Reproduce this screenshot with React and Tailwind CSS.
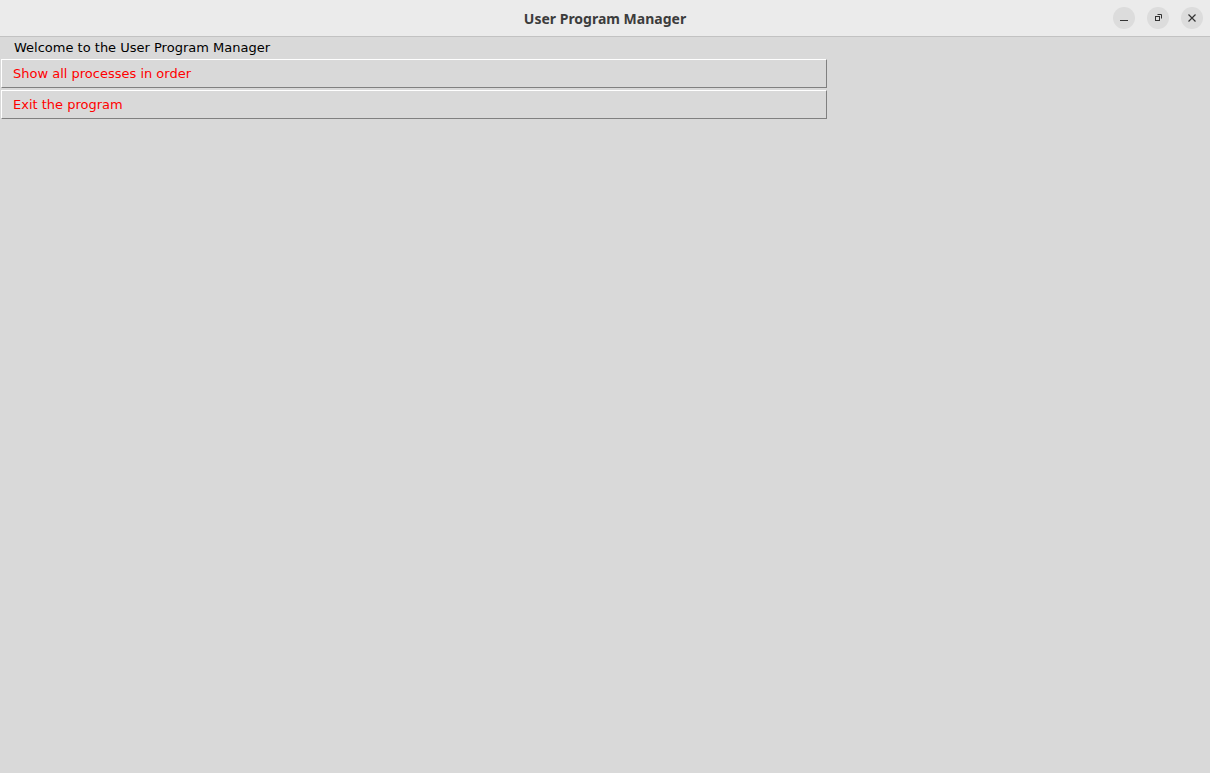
import React from "react";

function WindowButton({ children }) {
  return (
    <div className="w-[22px] h-[22px] rounded-full bg-[#dcdcdc] flex items-center justify-center">
      {children}
    </div>
  );
}

export default function App() {
  return (
    <div className="w-[1210px] h-[773px] bg-[#d9d9d9] flex flex-col overflow-hidden" style={{ fontFamily: "'DejaVu Sans', sans-serif" }}>
      {/* title bar */}
      <div className="h-[37px] shrink-0 bg-[#ebebeb] border-b border-[#c2c2c2] flex items-center relative">
        <div className="flex-1 text-center text-[14px] font-bold text-[#3c3c3c]" style={{ fontFamily: "'Noto Sans', 'DejaVu Sans', sans-serif" }}>
          User Program Manager
        </div>
        <div className="absolute right-[7px] top-[7px] flex gap-[12px]">
          <WindowButton>
            <svg width="10" height="10" viewBox="0 0 10 10">
              <path d="M1 7.5h8" stroke="#333" strokeWidth="1" />
            </svg>
          </WindowButton>
          <WindowButton>
            <svg width="10" height="10" viewBox="0 0 10 10">
              <rect x="2.5" y="3.5" width="4" height="4" fill="none" stroke="#333" strokeWidth="1" />
              <path d="M4.5 1.5h4v4" fill="none" stroke="#333" strokeWidth="1" />
            </svg>
          </WindowButton>
          <WindowButton>
            <svg width="10" height="10" viewBox="0 0 10 10">
              <path d="M1.5 1.5l7 7M8.5 1.5l-7 7" stroke="#333" strokeWidth="1.2" />
            </svg>
          </WindowButton>
        </div>
      </div>

      {/* content */}
      <div className="flex flex-col">
        <div className="h-[22px] pl-[14px] flex items-center text-[13px] text-black">
          Welcome to the User Program Manager
        </div>
        <div className="flex flex-col gap-[2px] ml-[1px] w-[826px]">
          <button className="h-[29px] text-left pl-[11px] text-[13px] text-[#ff0000] bg-[#d9d9d9] border border-t-white border-l-white border-b-[#808080] border-r-[#808080]">
            Show all processes in order
          </button>
          <button className="h-[29px] text-left pl-[11px] text-[13px] text-[#ff0000] bg-[#d9d9d9] border border-t-white border-l-white border-b-[#808080] border-r-[#808080]">
            Exit the program
          </button>
        </div>
      </div>
    </div>
  );
}
